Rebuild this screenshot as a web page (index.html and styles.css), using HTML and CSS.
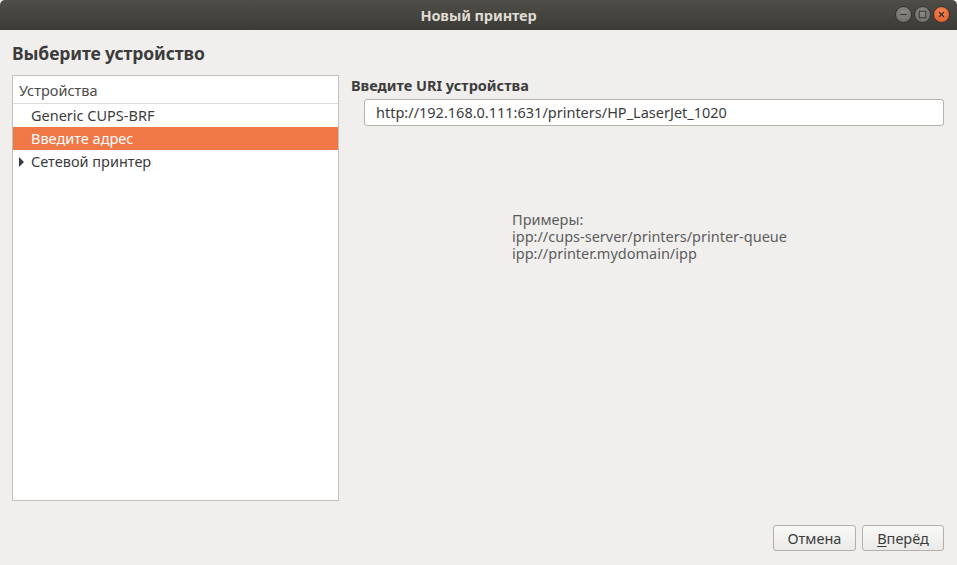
FILE: index.html
```html
<!DOCTYPE html>
<html lang="ru">
<head>
<meta charset="utf-8">
<link rel="stylesheet" href="styles.css">
</head>
<body>
<div class="window">
  <div class="titlebar">
    <span class="title">Новый принтер</span>
    <div class="controls">
      <span class="ctl ctl-min"><svg width="16" height="16" viewBox="0 0 16 16"><line x1="4.5" y1="8" x2="11.5" y2="8" stroke="#3a3935" stroke-width="1.2"/></svg></span>
      <span class="ctl ctl-max"><svg width="16" height="16" viewBox="0 0 16 16"><rect x="4.5" y="4.5" width="7" height="7" fill="none" stroke="#3a3935" stroke-width="1.1"/></svg></span>
      <span class="ctl ctl-close"><svg width="16" height="16" viewBox="0 0 16 16"><path d="M5.3 5.3 L10.7 10.7 M10.7 5.3 L5.3 10.7" stroke="#3a2a20" stroke-width="1.3"/></svg></span>
    </div>
  </div>
  <div class="content">
    <h1 class="heading">Выберите устройство</h1>
    <div class="main">
      <div class="list">
        <div class="list-head">Устройства</div>
        <div class="row">Generic CUPS-BRF</div>
        <div class="row selected">Введите адрес</div>
        <div class="row"><span class="expander"></span>Сетевой принтер</div>
      </div>
      <div class="right">
        <div class="label">Введите URI устройства</div>
        <div class="entry">http://192.168.0.111:631/printers/HP_LaserJet_1020</div>
        <div class="examples">
          <div class="ex-line">Примеры:</div>
          <div class="ex-line">ipp://cups-server/printers/printer-queue</div>
          <div class="ex-line">ipp://printer.mydomain/ipp</div>
        </div>
      </div>
    </div>
    <div class="actions">
      <button class="btn">Отмена</button>
      <button class="btn"><u>В</u>перёд</button>
    </div>
  </div>
</div>
</body>
</html>
```
FILE: styles.css
```css
* { box-sizing: border-box; }
html, body { margin: 0; padding: 0; }
body {
  width: 957px;
  height: 565px;
  overflow: hidden;
  font-family: "Noto Sans", "DejaVu Sans", sans-serif;
  background: #f0efed;
}
.window { width: 957px; height: 565px; display: flex; flex-direction: column; }
.titlebar {
  height: 30px;
  flex: none;
  background: linear-gradient(#4f4d47, #3c3b37);
  border-radius: 5px 5px 0 0;
  position: relative;
  display: flex;
  align-items: center;
  justify-content: center;
}
.title {
  color: #dfdbd2;
  font-weight: bold;
  font-size: 14.5px;
  letter-spacing: -0.1px;
}
.controls {
  position: absolute;
  right: 7px;
  top: 6px;
  display: flex;
  gap: 2px;
}
.ctl {
  width: 17px;
  height: 17px;
  border-radius: 50%;
  display: flex;
  align-items: center;
  justify-content: center;
  background: radial-gradient(circle at 50% 35%, #8b8a85, #6a6964);
  border: 1px solid #33322e;
}
.ctl svg { width: 15px; height: 15px; }
.ctl-close { background: radial-gradient(circle at 50% 35%, #f48a5a, #e0541f); }
.content {
  flex: 1;
  display: flex;
  flex-direction: column;
  padding: 0 13px 14px 12px;
}
.heading {
  margin: 11px 0 0 0;
  font-size: 17.5px;
  font-weight: bold;
  color: #3c3c3c;
  height: 34px;
  letter-spacing: -0.1px;
}
.main { flex: 1; display: flex; }
.list {
  width: 327px;
  height: 426px;
  background: #fff;
  border: 1px solid #c3c0bb;
  font-size: 14.5px;
  color: #3c3c3c;
}
.list-head {
  height: 28px;
  border-bottom: 1px solid #dcdad5;
  padding: 4px 0 0 6px;
  color: #4c4c4c;
}
.row {
  height: 23px;
  padding: 1px 0 0 18px;
  position: relative;
}
.row.selected { background: #f07746; color: #fff; }
.expander {
  position: absolute;
  left: 6px;
  top: 7px;
  width: 0;
  height: 0;
  border-top: 5px solid transparent;
  border-bottom: 5px solid transparent;
  border-left: 5px solid #3c3c3c;
}
.right { flex: 1; padding-left: 12px; }
.label {
  font-size: 14.5px;
  font-weight: bold;
  color: #3c3c3c;
  margin-top: 0;
  height: 24px;
}
.entry {
  margin-left: 13px;
  height: 27px;
  border: 1px solid #b6b3ad;
  border-radius: 3px;
  background: #fff;
  font-size: 14.5px;
  color: #3c3c3c;
  padding: 2px 0 0 11px;
}
.examples {
  margin: 85px 0 0 161px;
  font-size: 14.5px;
  color: #5d5d5d;
}
.ex-line { height: 17px; line-height: 17px; }
.actions {
  display: flex;
  justify-content: flex-end;
  gap: 6px;
  height: 26px;
}
.btn {
  font-family: inherit;
  font-size: 14.5px;
  color: #3c3c3c;
  height: 26px;
  width: 83px;
  border: 1px solid #b3b0ab;
  border-radius: 3px;
  background: linear-gradient(#f9f9f8, #ebeae8);
  padding: 0;
}
.btn:last-child { width: 82px; }
.btn u { text-decoration-thickness: 1px; text-underline-offset: 2px; }
```
